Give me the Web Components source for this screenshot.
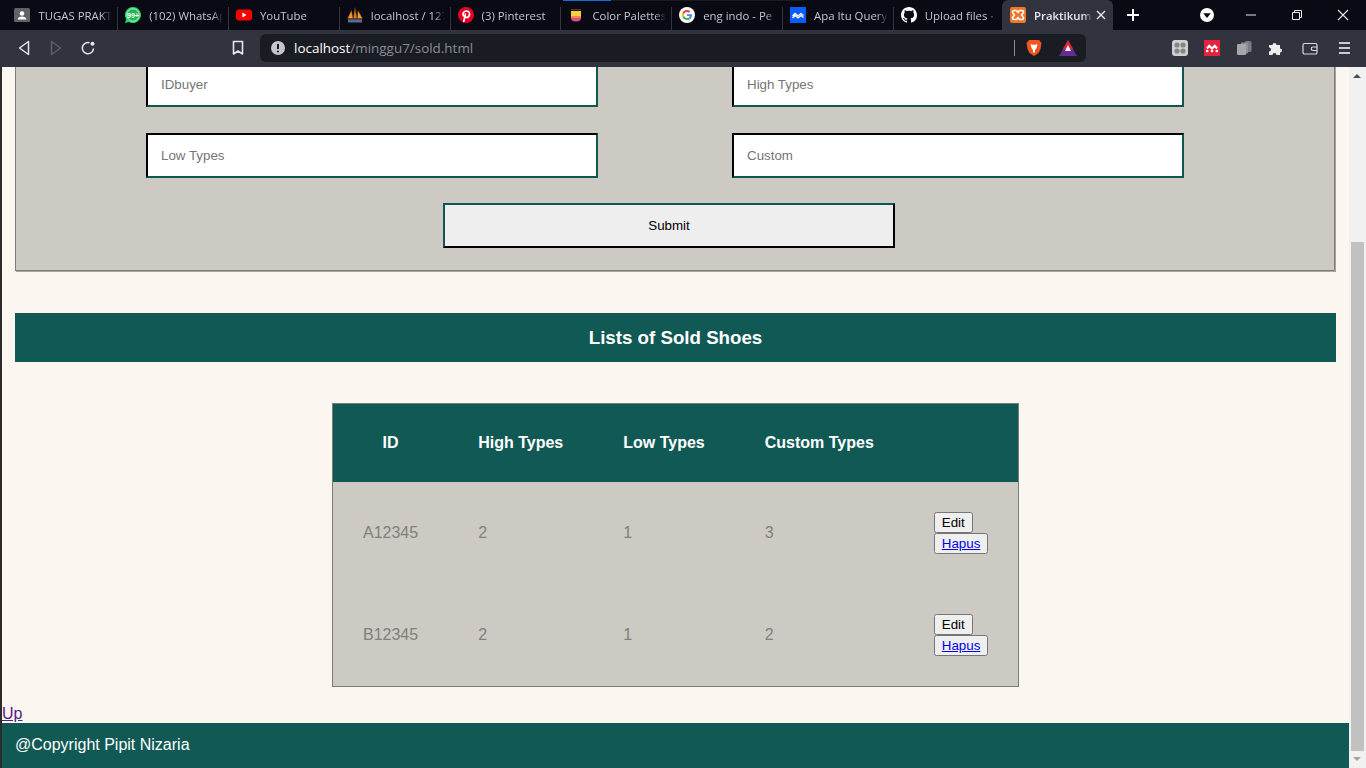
<!DOCTYPE html>
<html lang="en">
<head>
<meta charset="utf-8">
<title>Praktikum</title>
<style>
html, body { margin: 0; height: 100%; overflow: hidden; background: #2b2b2b; }
body { display: flex; flex-direction: column; font-family: "Liberation Sans", Arial, sans-serif; }
</style>
</head>
<body>

<browser-tabs>
  <browser-tab><svg slot="icon" viewBox="0 0 16 16"><rect x="0" y="1" width="16" height="14" rx="1.5" fill="#5f6368"/><circle cx="8" cy="6.5" r="2.3" fill="#fff"/><path d="M3.6 12.6c.4-2.3 2.3-3 4.4-3s4 .7 4.4 3z" fill="#fff"/></svg>TUGAS PRAKT</browser-tab>
  <browser-tab><svg slot="icon" viewBox="0 0 16 16"><path d="M8 0a8 8 0 0 0-6.8 12.2L0 16l3.9-1.1A8 8 0 1 0 8 0z" fill="#25d366"/><circle cx="8" cy="8" r="6.200" fill="#22b455" stroke="#dff5e6" stroke-width=".8"/><text x="8" y="10.500" font-family="Liberation Sans" font-size="7" font-weight="700" fill="#fff" text-anchor="middle">99+</text></svg>(102) WhatsAp</browser-tab>
  <browser-tab><svg slot="icon" viewBox="0 0 16 16"><rect x="0" y="2.5" width="16" height="11" rx="3" fill="#f00"/><path d="M6.4 5.6 10.6 8l-4.2 2.4z" fill="#fff"/></svg>YouTube</browser-tab>
  <browser-tab><svg slot="icon" viewBox="0 0 16 16"><path d="M.5 11.500 4.500 3.500l1.500 8z" fill="#f29a2e" stroke="#5a3a1a" stroke-width=".4"/><path d="M6.300 11.500 8 .5l2 11z" fill="#e9781c" stroke="#5a3a1a" stroke-width=".4"/><path d="M10.300 11.500 11 3.500l4.500 8z" fill="#f29a2e" stroke="#5a3a1a" stroke-width=".4"/><rect x="1" y="12.300" width="14" height="3.200" fill="#5b6a94"/></svg>localhost / 127</browser-tab>
  <browser-tab><svg slot="icon" viewBox="0 0 16 16"><circle cx="8" cy="8" r="8" fill="#e60023"/><path d="M5.800 14.400 7.400 7.200M5.400 8.800C4.200 6.200 6 4 8.300 4c2.300 0 3.500 1.500 3.200 3.500-.3 2-1.700 3.200-3 2.900-.8-.2-1.100-.7-1.100-.7" fill="none" stroke="#fff" stroke-width="1.700" stroke-linecap="round"/></svg>(3) Pinterest</browser-tab>
  <browser-tab><svg slot="icon" viewBox="0 0 16 16"><path d="M3 2.500h10v7H3z" fill="#f6d13b"/><path d="M3 9h10v2.500H3z" fill="#ef8a4a"/><path d="M3 11c0 2.500 2 3.500 5 3.500s5-1 5-3.500z" fill="#d9527f"/><path d="M3 2.500h10V4H3z" fill="#1a1a1a"/></svg>Color Palettes</browser-tab>
  <browser-tab><svg slot="icon" viewBox="0 0 16 16"><circle cx="8" cy="8" r="8" fill="#fff"/><path d="M12.900 8.200c0-.4 0-.7-.1-1H8v1.900h2.800a2.400 2.400 0 0 1-1 1.600l1.600 1.200c.9-.9 1.500-2.200 1.500-3.700z" fill="#4285f4"/><path d="M8 13c1.300 0 2.500-.4 3.400-1.100l-1.600-1.200c-.5.3-1.100.5-1.800.5-1.300 0-2.500-.9-2.900-2.100L3.400 10.300A5 5 0 0 0 8 13z" fill="#34a853"/><path d="M5.100 9.100a3 3 0 0 1 0-2L3.400 5.800a5 5 0 0 0 0 4.500z" fill="#fbbc05"/><path d="M8 5c.8 0 1.400.3 1.900.8l1.400-1.400A5 5 0 0 0 3.400 5.800l1.700 1.300C5.500 5.900 6.700 5 8 5z" fill="#ea4335"/></svg>eng indo - Pe</browser-tab>
  <browser-tab><svg slot="icon" viewBox="0 0 16 16"><rect width="16" height="16" fill="#0b5cff"/><path d="M2.500 9 5 6.500l3 2.500 3-2.500L13.500 8.500M2.500 11 5 8.500l3 2.500 3-2.500 2.500 2" fill="none" stroke="#fff" stroke-width="1.300"/></svg>Apa Itu Query</browser-tab>
  <browser-tab><svg slot="icon" viewBox="0 0 16 16"><path fill="#fff" d="M8 0C3.58 0 0 3.58 0 8c0 3.54 2.29 6.53 5.47 7.59.4.07.55-.17.55-.38 0-.19-.01-.82-.01-1.49-2.01.37-2.53-.49-2.69-.94-.09-.23-.48-.94-.82-1.13-.28-.15-.68-.52-.01-.53.63-.01 1.08.58 1.23.82.72 1.21 1.87.87 2.33.66.07-.52.28-.87.51-1.07-1.78-.2-3.64-.89-3.64-3.95 0-.87.31-1.59.82-2.15-.08-.2-.36-1.02.08-2.12 0 0 .67-.21 2.2.82.64-.18 1.32-.27 2-.27.68 0 1.36.09 2 .27 1.53-1.04 2.2-.82 2.2-.82.44 1.1.16 1.92.08 2.12.51.56.82 1.27.82 2.15 0 3.07-1.87 3.75-3.65 3.95.29.25.54.73.54 1.48 0 1.07-.01 1.93-.01 2.2 0 .21.15.46.55.38A8.013 8.013 0 0016 8c0-4.42-3.58-8-8-8z"/></svg>Upload files ·</browser-tab>
  <browser-tab active><svg slot="icon" viewBox="0 0 16 16"><rect width="16" height="16" rx="2" fill="#f0762a"/><path d="M4 3.500h2.500l1.500 2 1.500-2H12c1 0 1.500 1 1.500 2L11.500 8l2 2.500c0 1-.5 2-1.500 2H9.500L8 10.500l-1.500 2H4c-1 0-1.500-1-1.500-2L4.500 8l-2-2.500c0-1 .5-2 1.500-2z" fill="none" stroke="#fff" stroke-width="1.500" stroke-linejoin="round"/></svg>Praktikum</browser-tab>
</browser-tabs>

<browser-toolbar></browser-toolbar>

<page-view>
  <form-panel>
    <text-field>IDbuyer</text-field>
    <text-field>High Types</text-field>
    <text-field>Low Types</text-field>
    <text-field>Custom</text-field>
    <submit-box slot="submit">Submit</submit-box>
  </form-panel>
  <section-bar>Lists of Sold Shoes</section-bar>
  <shoes-table></shoes-table>
  <up-link>Up</up-link>
  <site-footer>@Copyright Pipit Nizaria</site-footer>
</page-view>

<script>
// little helper so every element reads the same
function shadow(el, html) {
  const t = document.createElement('template');
  t.innerHTML = html;
  el.attachShadow({ mode: 'open' }).append(t.content.cloneNode(true));
}

class BrowserTabs extends HTMLElement {
  constructor() {
    super();
    shadow(this, `
<style>
:host { display: flex; flex: none; height: 30px; background: #0a0a14; padding-left: 7.4px; position: relative; }
.tabs { display: flex; }
.plus { width: 16px; height: 16px; margin: 7px 0 0 12px; }
.profile { position: absolute; left: 1200px; top: 8px; width: 14px; height: 14px; }
.win { position: absolute; top: 8px; width: 14px; height: 14px; }
.loading { position: absolute; left: 563px; top: 0; width: 48px; height: 1px; background: #0a6fd6; }
.loading2 { position: absolute; left: 611px; top: 0; width: 193px; height: 1px; background: #1c1c1c; }
</style>
<div class="tabs"><slot></slot></div>
<svg class="plus" viewBox="0 0 16 16"><path d="M8 2v12M2 8h12" stroke="#fff" stroke-width="2"/></svg>
<svg class="profile" viewBox="0 0 14 14"><circle cx="7" cy="7" r="7" fill="#fff"/><path d="M3.200 5.200h7.600L7 10z" fill="#0a0a14"/></svg>
<svg class="win" style="left:1244px" viewBox="0 0 14 14"><path d="M2 7h10" stroke="#e8e8e8"/></svg>
<svg class="win" style="left:1290px" viewBox="0 0 14 14"><path d="M2.500 4.500h7v7h-7zM4.500 4.500v-2h7v7h-2" fill="none" stroke="#e8e8e8"/></svg>
<svg class="win" style="left:1336px" viewBox="0 0 14 14"><path d="M2 2l10 10M12 2 2 12" stroke="#e8e8e8" stroke-width="1.100"/></svg>
<div class="loading"></div><div class="loading2"></div>
`);
  }
}

class BrowserTab extends HTMLElement {
  constructor() {
    super();
    shadow(this, `
<style>
:host { display: flex; align-items: center; box-sizing: border-box; width: 110.8px; height: 30px; padding-left: 7px;
  font: 11.400px "Open Sans", "Noto Sans", sans-serif; color: #c3c5cc; position: relative; }
:host::after { content: ""; position: absolute; right: 0; top: 7px; height: 23px; border-right: 1px solid #33353f; }
:host([active]) { background: #31343f; border-radius: 6px 6px 0 0; color: #e6e7ea; font-weight: 600; width: 111px; margin-left: -2.600px; padding-left: 8px; }
:host([active])::after, :host(:nth-last-child(2))::after { display: none; }
.icon { width: 16px; height: 16px; flex: none; margin-right: 8px; }
::slotted(svg) { width: 16px; height: 16px; display: block; }
.label { flex: 1; min-width: 0; white-space: nowrap; overflow: hidden; margin-right: 6px;
  -webkit-mask-image: linear-gradient(to right, #000 85%, transparent); }
.close { display: none; width: 10px; height: 10px; flex: none; margin-right: 7px; }
:host([active]) .close { display: block; }
:host([active]) .label { margin-right: 4px; }
</style>
<span class="icon"><slot name="icon"></slot></span>
<span class="label"><slot></slot></span>
<svg class="close" viewBox="0 0 10 10"><path d="M1 1l8 8M9 1 1 9" stroke="#e6e7ea" stroke-width="1.400"/></svg>
`);
  }
}

class BrowserToolbar extends HTMLElement {
  constructor() {
    super();
    shadow(this, `
<style>
:host { display: flex; flex: none; align-items: center; height: 37px; background: #31343f; position: relative; }
svg { position: absolute; display: block; }
.url { position: absolute; left: 260px; top: 4px; width: 826px; height: 28px; border-radius: 6px; background: #1a1c24;
  font: 13.450px/28px "Open Sans", "Noto Sans", sans-serif; color: #8a8d96; }
.url span.addr { position: absolute; left: 34px; top: 0; white-space: nowrap; }
.url b { font-weight: 400; color: #fff; }
.url i { position: absolute; left: 754px; top: 6px; height: 16px; border-left: 1px solid #8a8d96; }
</style>
<svg style="left:18px;top:10px" width="12" height="16" viewBox="0 0 12 16"><path d="M10.500 1.500v13L1.500 8z" fill="none" stroke="#e4e5e8" stroke-width="1.500" stroke-linejoin="round"/></svg>
<svg style="left:50px;top:10px" width="12" height="16" viewBox="0 0 12 16"><path d="M1.500 1.500v13l9-6.500z" fill="none" stroke="#5c5f69" stroke-width="1.500" stroke-linejoin="round"/></svg>
<svg style="left:80px;top:10px" width="16" height="16" viewBox="0 0 16 16"><path d="M13.500 8.500A5.600 5.600 0 1 1 9.500 2.800" fill="none" stroke="#e4e5e8" stroke-width="1.600"/><circle cx="12.500" cy="3.800" r="2" fill="#e4e5e8"/></svg>
<svg style="left:232px;top:10px" width="12" height="16" viewBox="0 0 12 16"><path d="M1.500 1.500h9v12.500L6 11l-4.500 3z" fill="none" stroke="#e4e5e8" stroke-width="1.600" stroke-linejoin="round"/></svg>
<div class="url">
  <svg style="left:11px;top:7px" width="14" height="14" viewBox="0 0 14 14"><circle cx="7" cy="7" r="7" fill="#c4c6cb"/><path d="M7 3v5" stroke="#1a1c24" stroke-width="2"/><circle cx="7" cy="10.500" r="1.100" fill="#1a1c24"/></svg>
  <span class="addr"><b>localhost</b>/minggu7/sold.html</span>
  <i></i>
  <svg style="left:766px;top:5px" width="16" height="18" viewBox="0 0 16 18"><path d="M3 1h10l2.500 3-1 6-2 4-4.500 3-4.500-3-2-4-1-6z" fill="#f1561f"/><path d="M4.500 5l2 .8h3l2-.8-1 4-1.500 2v2L8 14l-1-1v-2L5.500 9z" fill="#fff"/></svg>
  <svg style="left:798px;top:5px" width="20" height="18" viewBox="0 0 20 18"><path d="M10 1 19 17H1z" fill="#662d91"/><path d="M10 1 15 10H5z" fill="#e0262e"/><path d="M10 6l3 6H7z" fill="#f4f4f6"/></svg>
</div>
<svg style="left:1172px;top:10px" width="16" height="16" viewBox="0 0 16 16"><rect width="16" height="16" rx="3" fill="#cfcfcf"/><circle cx="5" cy="5" r="2.600" fill="#858585"/><circle cx="11" cy="5" r="2.600" fill="#858585"/><circle cx="5" cy="11" r="2.600" fill="#858585"/><circle cx="11" cy="11" r="2.600" fill="#858585"/></svg>
<svg style="left:1204px;top:10px" width="16" height="16" viewBox="0 0 16 16"><rect width="16" height="16" fill="#e5233d"/><path d="M3 8.500 5.200 5.800 8 8.500l2.800-2.700L13 8.500" fill="none" stroke="#fff" stroke-width="2"/><circle cx="3.200" cy="11" r="1.300" fill="#fff"/><circle cx="8" cy="11" r="1.300" fill="#fff"/><circle cx="12.800" cy="11" r="1.300" fill="#fff"/></svg>
<svg style="left:1236px;top:10px" width="16" height="16" viewBox="0 0 16 16"><rect x="9" y="1" width="6.500" height="11" rx="1.500" fill="#7a7c82"/><rect x="5" y="2.500" width="7" height="11" rx="1" fill="#8e9095"/><rect x="1" y="4" width="9" height="11" rx="1" fill="#a4a6a9"/></svg>
<svg style="left:1268px;top:10px" width="16" height="16" viewBox="0 0 16 16"><path d="M1 5h3.500a2 2 0 1 1 4 0H12v3.500a2 2 0 1 1 0 4V15H8.500a2 2 0 1 0-4 0H1v-3.500a2 2 0 1 0 0-4z" fill="#eceded"/></svg>
<svg style="left:1302px;top:10px" width="16" height="16" viewBox="0 0 16 16"><path d="M13 3.500H2.500A1.500 1.500 0 0 0 1 5v7.500A1.500 1.500 0 0 0 2.500 14h11a1.500 1.500 0 0 0 1.500-1.500V5a1.500 1.500 0 0 0-1.500-1.500zM15 7h-4a1.500 1.500 0 0 0 0 3.500h4" fill="none" stroke="#d9dadc" stroke-width="1.200"/></svg>
<svg style="left:1337px;top:10px" width="14" height="16" viewBox="0 0 14 16"><path d="M2 3h11M2 8h11M2 13h11" stroke="#c9cace" stroke-width="1.800"/></svg>
`);
  }
}

// the view is scrolled, so the top of the form is cut off by the toolbar
class PageView extends HTMLElement {
  constructor() {
    super();
    shadow(this, `
<style>
:host { display: flex; flex: 1; min-height: 0; padding-left: 2px; overflow: hidden; }
.doc { flex: 1; min-width: 0; background: #fbf6ef; display: flex; flex-direction: column; overflow: hidden; }
.bar { flex: none; width: 17px; background: #f1f1f1; display: flex; flex-direction: column; }
.arrow { flex: none; margin-left: 4px; width: 0; height: 0; border: 4px solid transparent; }
.arrow.up { margin-top: 7px; border-top: 0; border-bottom-color: #505050; }
.arrow.down { margin: 6px 0 7px 4px; border-bottom: 0; border-top-color: #a3a3a3; }
.spacer { flex: none; height: 164px; }
.thumb { flex: 1; margin: 0 2px; background: #c1c1c1; }
</style>
<div class="doc"><slot></slot></div>
<div class="bar"><div class="arrow up"></div><div class="spacer"></div><div class="thumb"></div><div class="arrow down"></div></div>
`);
  }
}

class FormPanel extends HTMLElement {
  constructor() {
    super();
    shadow(this, `
<style>
:host { display: block; flex: none; box-sizing: border-box; margin: -5px 14px 0 13px; height: 209px; background: #cdcac3;
  border-left: 1px solid #7c7c7c; border-right: 1px solid #7c7c7c; border-bottom: 1px solid #7c7c7c; box-shadow: 1px 1px 0 #a5a4a0; padding-left: 130px; }
.grid { display: grid; grid-template-columns: 452px 452px; column-gap: 134px; row-gap: 26px; }
.submit { margin: 25px 0 0 297px; }
</style>
<div class="grid"><slot></slot></div>
<div class="submit"><slot name="submit"></slot></div>
`);
  }
}

class TextField extends HTMLElement {
  constructor() {
    super();
    shadow(this, `
<style>
:host { display: block; box-sizing: border-box; height: 45px; background: #fff; padding-left: 13px;
  border: 2px solid; border-color: #000 #10574f #10574f #000;
  font: 13.333px/41px "Liberation Sans", Arial, sans-serif; color: #757575; }
</style>
<slot></slot>
`);
  }
}

class SubmitBox extends HTMLElement {
  constructor() {
    super();
    shadow(this, `
<style>
:host { display: block; box-sizing: border-box; width: 452px; height: 45px; background: #eeeeee; text-align: center;
  border: 2px solid; border-color: #10574f #000 #000 #10574f;
  font: 13.333px/41px "Liberation Sans", Arial, sans-serif; color: #000; }
</style>
<slot></slot>
`);
  }
}

class SectionBar extends HTMLElement {
  constructor() {
    super();
    shadow(this, `
<style>
:host { display: block; flex: none; margin: 42px 13px 0 13px; height: 49px; background: #105955; color: #fff; text-align: center;
  font: 700 18.720px/49px "Liberation Sans", Arial, sans-serif; }
</style>
<slot></slot>
`);
  }
}

class ShoesTable extends HTMLElement {
  constructor() {
    super();
    const rows = [['A12345', '2', '1', '3'], ['B12345', '2', '1', '2']];
    shadow(this, `
<style>
:host { display: block; flex: none; margin: 41px 0 0 330px; width: 687px; }
table { width: 687px; border-collapse: separate; border-spacing: 0; background: #cdcac3; border: 1px solid #7c7c7c; box-sizing: border-box;
  font: 16px "Liberation Sans", Arial, sans-serif; }
th { background: #105955; color: #fff; padding: 30px; text-align: center; line-height: 18px; white-space: nowrap; }
td { padding: 30px; color: #808080; text-align: left; }
button { display: block; font: 13.333px Arial, "Liberation Sans", sans-serif; margin: 0; white-space: nowrap; }
a { color: #0000ee; }
</style>
<table>
  <thead><tr><th>ID</th><th>High Types</th><th>Low Types</th><th>Custom Types</th><th></th></tr></thead>
  <tbody>
  ${rows.map(r => `<tr>${r.map(c => `<td>${c}</td>`).join('')}<td><button>Edit</button><button><a href="#">Hapus</a></button></td></tr>`).join('')}
  </tbody>
</table>
`);
  }
}

class UpLink extends HTMLElement {
  constructor() {
    super();
    shadow(this, `
<style>
:host { display: block; flex: none; margin-top: 18px; height: 18px; font: 16px/18px "Liberation Sans", Arial, sans-serif; }
a { color: #551a8b; }
</style>
<a href="#"><slot></slot></a>
`);
  }
}

class SiteFooter extends HTMLElement {
  constructor() {
    super();
    shadow(this, `
<style>
:host { display: block; flex: 1; background: #105955; color: #fff; padding-left: 13px; font: 16px/43px "Liberation Sans", Arial, sans-serif; }
</style>
<slot></slot>
`);
  }
}

customElements.define('browser-tabs', BrowserTabs);
customElements.define('browser-tab', BrowserTab);
customElements.define('browser-toolbar', BrowserToolbar);
customElements.define('page-view', PageView);
customElements.define('form-panel', FormPanel);
customElements.define('text-field', TextField);
customElements.define('submit-box', SubmitBox);
customElements.define('section-bar', SectionBar);
customElements.define('shoes-table', ShoesTable);
customElements.define('up-link', UpLink);
customElements.define('site-footer', SiteFooter);
</script>
</body>
</html>
